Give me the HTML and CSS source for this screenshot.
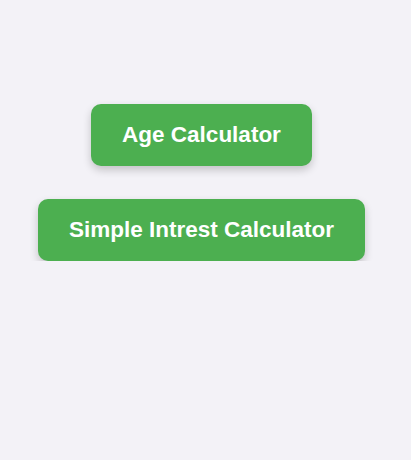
FILE: index.html
```html
<!DOCTYPE html>
<html>
<head>
<meta charset="utf-8">
<link rel="stylesheet" href="styles.css">
</head>
<body>
<main class="menu">
  <button class="btn">Age Calculator</button>
  <button class="btn">Simple Intrest Calculator</button>
</main>
</body>
</html>
```
FILE: styles.css
```css
html, body {
  margin: 0;
  background: #f3f2f7;
  font-family: "Liberation Sans", Arial, sans-serif;
}
.menu {
  display: flex;
  flex-direction: column;
  align-items: center;
  gap: 33px;
  padding: 104px 8px 0 0;
}
.btn {
  background: #4caf50;
  color: #fff;
  border: none;
  border-radius: 10px;
  font-family: "Liberation Sans", Arial, sans-serif;
  font-weight: bold;
  font-size: 22.5px;
  line-height: 22px;
  padding: 20px 31px;
  box-shadow: 0 4px 8px rgba(0, 0, 0, 0.2);
  cursor: pointer;
}
```
